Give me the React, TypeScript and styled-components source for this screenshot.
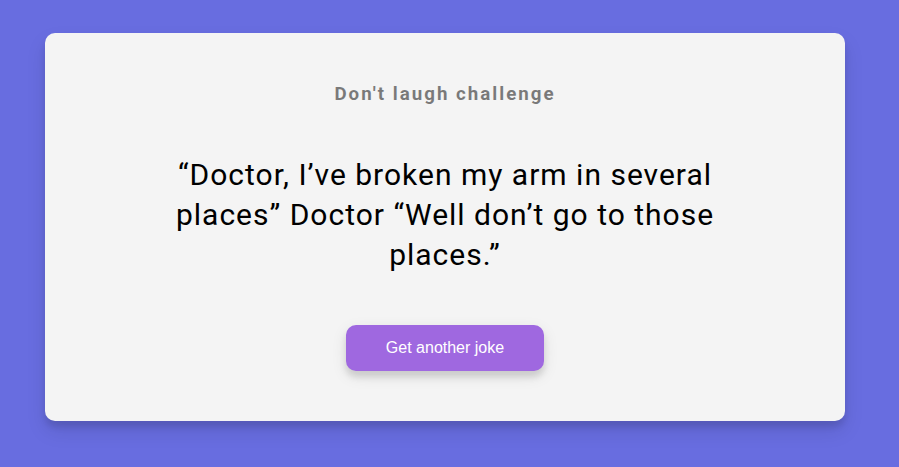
import React from "react";
import styled, { createGlobalStyle } from "styled-components";

const Global = createGlobalStyle`
  * { box-sizing: border-box; }
  html, body { margin: 0; padding: 0; }
  body {
    background: #686de0;
    font-family: Roboto, "Liberation Sans", sans-serif;
    overflow: hidden;
  }
`;

const Page = styled.div`
  min-height: 100vh;
  display: flex;
  align-items: flex-start;
  justify-content: flex-start;
  padding: 33px 0 0 45px;
`;

const Card = styled.div`
  width: 800px;
  background: #f4f4f4;
  border-radius: 10px;
  box-shadow: 0 10px 20px rgba(0, 0, 0, 0.1), 0 6px 6px rgba(0, 0, 0, 0.1);
  padding: 50px 20px;
  text-align: center;
`;

const Title = styled.h3`
  margin: 0;
  font-size: 18.72px;
  font-weight: 700;
  line-height: 22px;
  letter-spacing: 2px;
  color: #000;
  opacity: 0.5;
`;

const Joke = styled.div`
  font-size: 30px;
  letter-spacing: 1px;
  line-height: 40px;
  margin: 50px auto;
  max-width: 600px;
  color: #000;
`;

const Button = styled.button`
  background: #9f68e0;
  color: #fff;
  border: 0;
  border-radius: 10px;
  box-shadow: 0 5px 15px rgba(0, 0, 0, 0.1), 0 6px 6px rgba(0, 0, 0, 0.1);
  padding: 14px 40px;
  font-family: "Liberation Sans", Arial, sans-serif;
  font-size: 16px;
  line-height: 18px;
  cursor: pointer;
`;

export default function App() {
  return (
    <>
      <Global />
      <Page>
        <Card>
          <Title>Don't laugh challenge</Title>
          <Joke>
            “Doctor, I’ve broken my arm in several places” Doctor “Well don’t go to those places.”
          </Joke>
          <Button>Get another joke</Button>
        </Card>
      </Page>
    </>
  );
}
